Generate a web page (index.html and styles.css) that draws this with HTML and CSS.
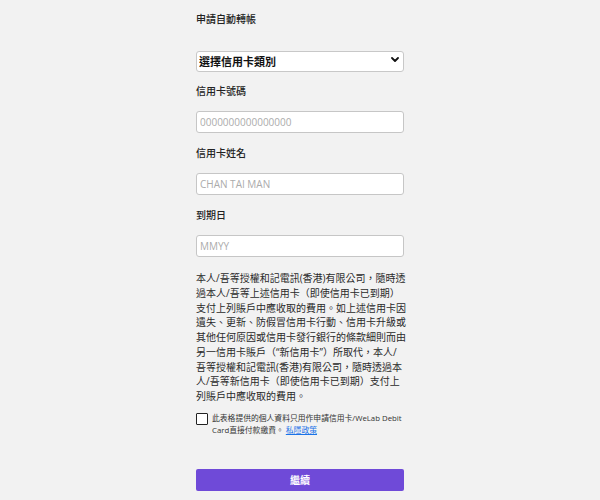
FILE: index.html
```html
<!DOCTYPE html>
<html lang="zh-Hant">
<head>
<meta charset="utf-8">
<title>申請自動轉帳</title>
<link rel="stylesheet" href="styles.css">
</head>
<body>
<main class="form">
  <h1 class="title">申請自動轉帳</h1>
  <div class="select-wrap">
    <select class="select"><option>選擇信用卡類別</option></select>
    <svg class="chevron" width="8" height="5" viewBox="0 0 8 5"><path d="M1 1l3 3 3-3" fill="none" stroke="#111" stroke-width="1.8" stroke-linecap="round" stroke-linejoin="round"/></svg>
  </div>
  <label class="label">信用卡號碼</label>
  <input class="input" type="text" placeholder="0000000000000000">
  <label class="label">信用卡姓名</label>
  <input class="input" type="text" placeholder="CHAN TAI MAN">
  <label class="label">到期日</label>
  <input class="input" type="text" placeholder="MMYY">
  <p class="terms">本人/吾等授權和記電訊(香港)有限公司，隨時透<br>過本人/吾等上述信用卡（即使信用卡已到期）<br>支付上列賬戶中應收取的費用。如上述信用卡因<br>遺失、更新、防假冒信用卡行動、信用卡升級或<br>其他任何原因或信用卡發行銀行的條款細則而由<br>另一信用卡賬戶（“新信用卡”）所取代，本人/<br>吾等授權和記電訊(香港)有限公司，隨時透過本<br>人/吾等新信用卡（即使信用卡已到期）支付上<br>列賬戶中應收取的費用。</p>
  <label class="consent">
    <input class="check" type="checkbox">
    <span class="consent-text">此表格提供的個人資料只用作申請信用卡/WeLab Debit<br>Card直接付款繳費。 <a class="link" href="#">私隱政策</a></span>
  </label>
  <button class="submit" type="button">繼續</button>
</main>
</body>
</html>
```
FILE: styles.css
```css
html, body {
  margin: 0;
  padding: 0;
  background: #f2f2f2;
}
body {
  font-family: "Open Sans", "Noto Sans CJK TC", sans-serif;
  color: #222;
}
.form {
  width: 208px;
  margin: 0 auto;
  padding-top: 12px;
  display: flex;
  flex-direction: column;
}
.title {
  margin: 0 0 23px;
  font-size: 10px;
  line-height: 14px;
  font-weight: 500;
  color: #222;
}
.select-wrap {
  position: relative;
  height: 21px;
}
.select {
  appearance: none;
  -webkit-appearance: none;
  width: 100%;
  height: 21px;
  margin: 0;
  padding: 0 0 0 2px;
  border: 1px solid #c8c8c8;
  border-radius: 3px;
  background: #fff;
  font-family: "Noto Sans CJK TC", sans-serif;
  font-size: 11px;
  font-weight: 700;
  color: #111;
  box-sizing: border-box;
}
.chevron {
  position: absolute;
  right: 5px;
  top: 8px;
  pointer-events: none;
}
.label {
  display: block;
  margin: 14px 0 13px;
  font-size: 10px;
  line-height: 14px;
  font-weight: 500;
  color: #222;
}
.input + .label {
  margin-top: 13px;
}
.input {
  display: block;
  width: 100%;
  height: 22px;
  margin: 0;
  padding: 0 3px;
  border: 1px solid #c6c6c6;
  border-radius: 3px;
  background: #fff;
  box-sizing: border-box;
  font-family: "Open Sans", sans-serif;
  font-size: 10px;
  color: #333;
}
.input::placeholder {
  color: #ababab;
}
.terms {
  margin: 14px 0 0;
  font-size: 10px;
  line-height: 14.75px;
  color: #2a2a2a;
  white-space: nowrap;
}
.consent {
  display: flex;
  align-items: flex-start;
  gap: 4px;
  margin-top: 8px;
}
.check {
  appearance: none;
  -webkit-appearance: none;
  flex: none;
  width: 12px;
  height: 12px;
  margin: 1px 0 0;
  border: 1.5px solid #222;
  border-radius: 1px;
  background: #fff;
  box-sizing: border-box;
}
.consent-text {
  font-size: 7.8px;
  line-height: 12px;
  color: #333;
  white-space: nowrap;
}
.link {
  color: #1a73e8;
  text-decoration: underline;
}
.submit {
  margin-top: 33px;
  height: 22px;
  width: 100%;
  border: 0;
  border-radius: 2px;
  background: #6f4ad8;
  color: #fff;
  font-family: "Noto Sans CJK TC", sans-serif;
  font-size: 10px;
  font-weight: 700;
}
```
